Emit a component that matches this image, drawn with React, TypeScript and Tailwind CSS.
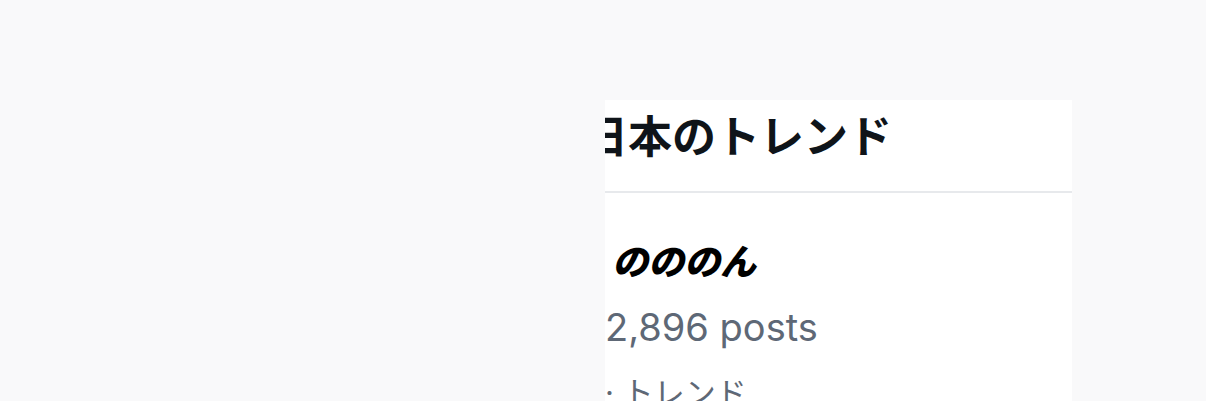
const cjk = { fontFamily: '"Noto Sans CJK JP", "Noto Sans", sans-serif' };
const latin = { fontFamily: 'Inter, "Noto Sans CJK JP", sans-serif' };

export default function App() {
  return (
    <div className="h-[401px] w-full overflow-hidden bg-[#f9f9fa] pl-[605px] pt-[100px]">
      <section className="h-[301px] w-[467px] overflow-hidden bg-white">
        <header className="h-[91px] pt-[12px]">
          <h2
            className="-ml-[21px] whitespace-nowrap text-[44px] font-bold leading-none text-[#0f1419]"
            style={cjk}
          >
            日本のトレンド
          </h2>
        </header>
        <div className="h-[2px] bg-[#e7e9ec]" />

        <div className="mt-[48px] flex flex-col">
          <div
            className="ml-[7px] whitespace-nowrap text-[36px] font-black italic leading-none text-black"
            style={cjk}
          >
            のののん
          </div>
          <div
            className="mt-[31px] whitespace-nowrap text-[38px] leading-none text-[#5e6876]"
            style={latin}
          >
            2,896 posts
          </div>
          <div
            className="mt-[31px] whitespace-nowrap text-[31px] leading-none text-[#5e6876]"
            style={latin}
          >
            · トレンド
          </div>
        </div>
      </section>
    </div>
  );
}
